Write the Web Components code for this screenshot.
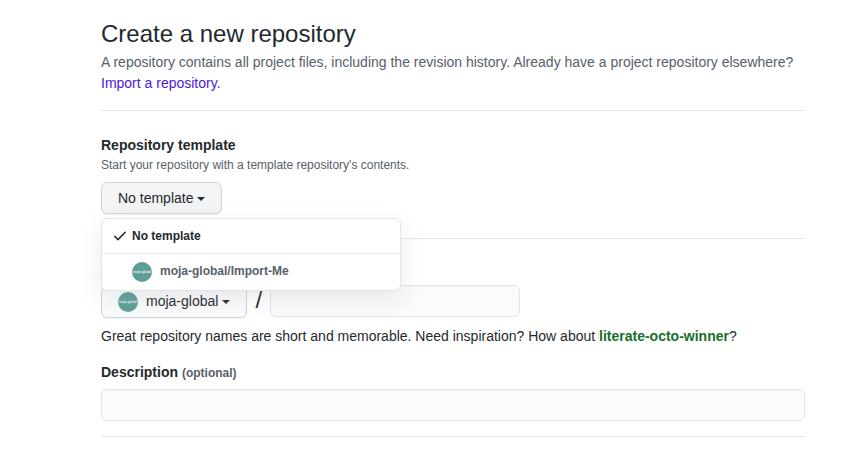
<!DOCTYPE html>
<html lang="en">
<head>
<meta charset="utf-8">
<title>Create a new repository</title>
<style>
body { margin: 0; background: #fff; color: #24292e; font: 14px/21px "Liberation Sans", Arial, sans-serif; }
</style>
</head>
<body>
<new-repository></new-repository>
<script>
function define(name, html) {
  const template = document.createElement('template');
  template.innerHTML = html;
  customElements.define(name, class extends HTMLElement {
    constructor() {
      super();
      this.attachShadow({ mode: 'open' }).append(template.content.cloneNode(true));
    }
  });
}

define('page-header', `
<style>
:host { display: block; height: 94px; border-bottom: 1px solid #e1e4e8; color: #586069; }
h1 { margin: 0; font-size: 24px; line-height: 36px; font-weight: 400; color: #24292e; }
p { margin: 0; }
</style>
<h1><slot name="title"></slot></h1><p><slot></slot></p>`);

define('drop-button', `
<style>
:host { display: inline-flex; box-sizing: border-box; height: 32px; padding: 0 16px; align-items: center; border: 1px solid #d1d4d7; border-radius: 6px; background: var(--button-bg, #fafbfc); box-shadow: 0 1px 0 rgba(27,31,35,.04); line-height: 20px; white-space: nowrap; }
i { margin-left: 4px; margin-top: 2px; border: 4px solid transparent; border-top-color: currentColor; border-bottom: 0; }
</style>
<slot></slot><i></i>`);

define('org-avatar', `
<style>
:host { display: inline-flex; flex: none; width: 20px; height: 20px; margin-right: 8px; }
svg { display: block; overflow: visible; }
</style>
<svg width="20" height="20" viewBox="0 0 20 20"><circle cx="10" cy="10" r="10" fill="#5c9f98"/><text x="10" y="11.2" text-anchor="middle" font-family="Liberation Sans, sans-serif" font-size="3.3" font-weight="700" fill="#e4f1ef">moja global</text></svg>`);

define('text-field', `
<style>
:host { display: block; box-sizing: border-box; height: 32px; border: 1px solid #e1e4e8; border-radius: 6px; background: #fafbfc; box-shadow: inset 0 1px 0 rgba(225,228,232,.2); }
</style>`);

define('menu-item', `
<style>
:host { display: flex; align-items: center; box-sizing: border-box; height: 34px; padding-left: 12px; font-size: 12px; line-height: 18px; font-weight: 700; color: #24292e; }
:host([repo]) { height: 37px; padding-left: 30px; border-top: 1px solid #eaecef; color: #586069; }
:host([repo]) .label { margin-top: -2px; }
svg { display: none; width: 12px; height: 16px; margin-right: 6px; flex: none; }
:host([checked]) svg { display: block; }
</style>
<svg viewBox="0 0 12 16"><path d="M.7 8.3 4 11.6 11.3 4.3" fill="none" stroke="#24292e" stroke-width="1.5" stroke-linecap="round" stroke-linejoin="round"/></svg><slot name="icon"></slot><span class="label"><slot></slot></span>`);

define('template-picker', `
<style>
:host { display: block; position: relative; height: 32px; --button-bg: #f3f4f6; }
.menu { position: absolute; z-index: 5; left: 0; top: 36px; box-sizing: border-box; width: 300px; height: 73px; border: 1px solid #e1e4e8; border-radius: 6px; background: #fff; box-shadow: 0 8px 24px rgba(149,157,165,.2); }
</style>
<drop-button>No template</drop-button>
<div class="menu">
<menu-item checked>No template</menu-item>
<menu-item repo><org-avatar slot="icon"></org-avatar>moja-global/Import-Me</menu-item>
</div>`);

define('new-repository', `
<style>
:host { display: block; box-sizing: border-box; width: 704px; margin-left: 101px; padding-top: 16px; }
a { color: #4c18e0; text-decoration: none; }
.template { padding-top: 24px; height: 103px; border-bottom: 1px solid #e1e4e8; }
.label { font-weight: 700; }
.note { font-size: 12px; line-height: 18px; color: #586069; margin-bottom: 8px; }
.owner { display: flex; align-items: flex-start; padding-top: 46px; height: 32px; }
.owner drop-button { margin-top: 1px; padding-bottom: 2px; }
.owner org-avatar { margin-top: 1px; }
.slash { font-size: 24px; line-height: 30px; width: 7px; margin: 0 8px; }
.owner text-field { width: 250px; }
.hint { margin-top: 9px; }
.hint b { color: #176f2c; }
.description { margin-top: 15px; padding-bottom: 15px; border-bottom: 1px solid #e1e4e8; }
.description .label { height: 21px; margin-bottom: 6px; }
.description small { font-size: 12px; line-height: 18px; color: #586069; }
</style>
<page-header><span slot="title">Create a new repository</span>A repository contains all project files, including the revision history. Already have a project repository elsewhere? <a>Import a repository.</a></page-header>
<section class="template">
<div class="label">Repository template</div>
<div class="note">Start your repository with a template repository's contents.</div>
<template-picker></template-picker>
</section>
<section class="owner">
<drop-button><org-avatar></org-avatar>moja-global</drop-button><span class="slash">/</span><text-field></text-field>
</section>
<div class="hint">Great repository names are short and memorable. Need inspiration? How about <b>literate-octo-winner</b>?</div>
<section class="description">
<div class="label">Description <small>(optional)</small></div>
<text-field></text-field>
</section>`);
</script>
</body>
</html>
